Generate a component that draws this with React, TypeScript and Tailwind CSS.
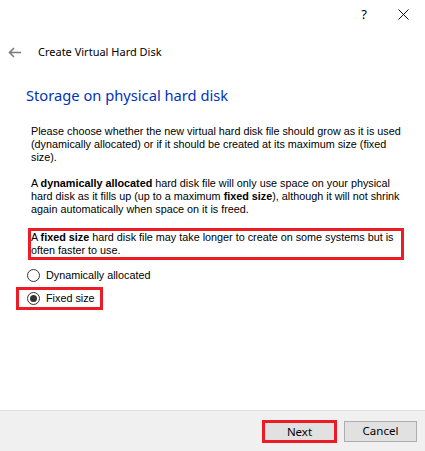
import React from 'react';

const body = { fontFamily: '"Liberation Sans", Arial, sans-serif' };
const ui = { fontFamily: '"Noto Sans", "Open Sans", sans-serif' };

function Radio({ checked }: { checked?: boolean }) {
  return (
    <span className="flex h-[13px] w-[13px] items-center justify-center rounded-full border border-[#333333] bg-white">
      {checked && <span className="h-[7px] w-[7px] rounded-full bg-[#333333]" />}
    </span>
  );
}

export default function App() {
  return (
    <div className="relative flex h-[451px] w-[425px] flex-col overflow-hidden bg-white text-black">
      {/* Title bar */}
      <div className="flex h-[28px] items-center justify-end">
        <span className="mr-[31px] text-[13px] leading-none" style={ui}>?</span>
        <svg className="mr-[16px]" width="11" height="11" viewBox="0 0 11 11">
          <path d="M0.5 0.5 L10.5 10.5 M10.5 0.5 L0.5 10.5" stroke="#111" strokeWidth="1" />
        </svg>
      </div>

      {/* Wizard header */}
      <div className="mt-[14px] flex h-[20px] items-center">
        <svg className="ml-[8px]" width="13" height="11" viewBox="0 0 13 11">
          <path d="M13 5.5 H1.5 M6 1 L1.5 5.5 L6 10" fill="none" stroke="#7a7a7a" strokeWidth="1.6" />
        </svg>
        <span className="ml-[17px] text-[11px]" style={ui}>Create Virtual Hard Disk</span>
      </div>

      <div className="ml-[26px] mt-[21px] h-[24px] text-[14.7px] leading-[24px] text-[#0033bc]" style={ui}>
        Storage on physical hard disk
      </div>

      {/* Description */}
      <div className="ml-[31px] mt-[18px] whitespace-nowrap text-[10.8px] leading-[13px]" style={body}>
        <p>
          Please choose whether the new virtual hard disk file should grow as it is used
          <br />
          (dynamically allocated) or if it should be created at its maximum size (fixed
          <br />
          size).
        </p>
        <p className="mt-[13px]">
          A <b>dynamically allocated</b> hard disk file will only use space on your physical
          <br />
          hard disk as it fills up (up to a maximum <b>fixed size</b>), although it will not shrink
          <br />
          again automatically when space on it is freed.
        </p>
        <p className="-ml-[3px] mt-[12px] w-[376px] border-[3px] border-[#ed1c24]">
          A <b>fixed size</b> hard disk file may take longer to create on some systems but is
          <br />
          often faster to use.
        </p>
      </div>

      {/* Options */}
      <div className="text-[10.8px]" style={body}>
        <label className="ml-[27px] mt-[5px] flex h-[20px] items-center gap-[6px]">
          <Radio />
          Dynamically allocated
        </label>
        <label className="ml-[16px] mt-[2px] flex h-[23px] w-[87px] items-center gap-[6px] border-[3px] border-[#ed1c24] pl-[8px]">
          <Radio checked />
          Fixed size
        </label>
      </div>

      {/* Footer */}
      <div className="mt-auto flex h-[41px] items-center justify-end gap-[7px] border-t border-[#dfdfdf] bg-[#f0f0f0] pr-[8px] text-[11.5px]" style={ui}>
        <button className="h-[23px] w-[75px] border-[3px] border-[#ed1c24] bg-[#e1e1e1]">Next</button>
        <button className="h-[21px] w-[73px] border border-[#adadad] bg-[#e1e1e1]">Cancel</button>
      </div>
    </div>
  );
}
